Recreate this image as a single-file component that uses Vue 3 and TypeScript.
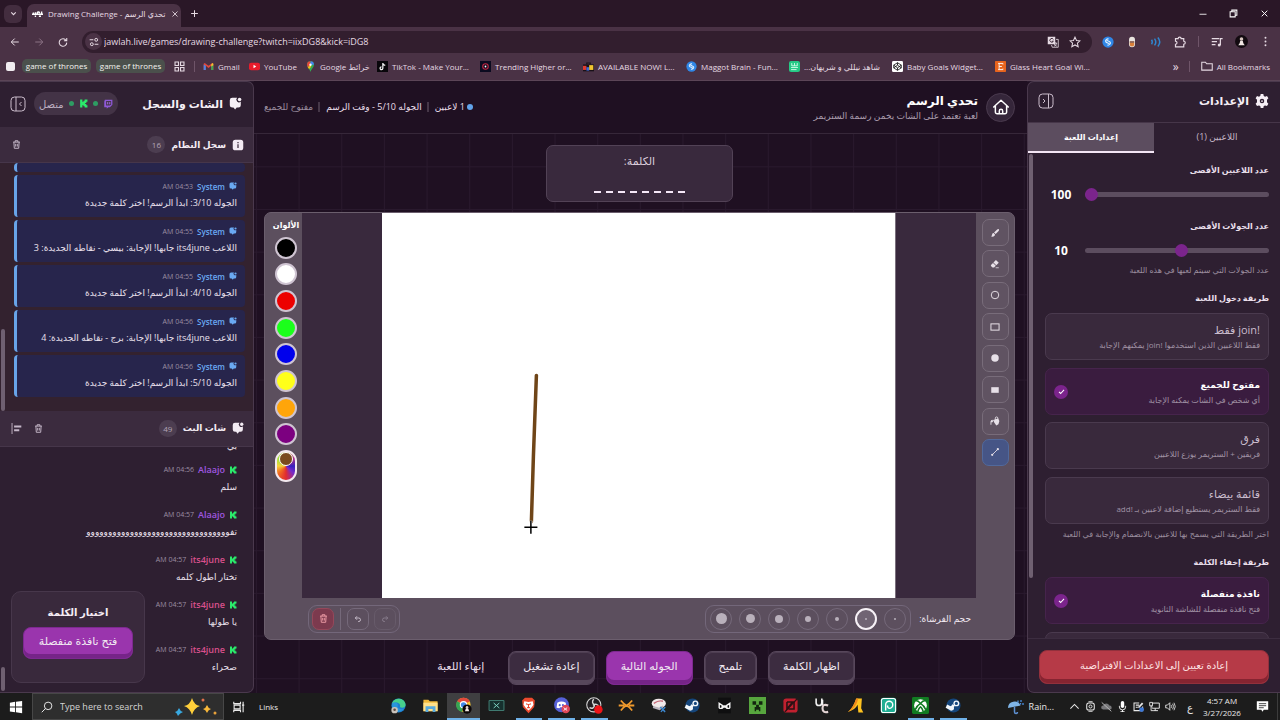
<script setup lang="ts">
import { ref } from 'vue'

interface Bookmark { label: string; icon: string; rtl?: boolean }
interface LogEntry { time: string; text: string }
interface ChatEntry { user: string; time: string; text: string; tone: string }
interface Choice { title: string; desc: string; value: string }

const glyphs: Record<string, string> = {
  trash: '<path d="M3 4.5h10M6 4.5V2.5h4v2M4.2 4.5l.6 9h6.4l.6-9M6.8 7v4M9.2 7v4" fill="none" stroke="currentColor" stroke-width="1.4"/>',
  chat: '<path d="M4 1h6a3 3 0 0 0 4.500 4.500V10a3 3 0 0 1-3 3h-2L7.500 15.500 5.500 13H4a3 3 0 0 1-3-3V4a3 3 0 0 1 3-3z" fill="currentColor"/><circle cx="13" cy="3" r="2.200" fill="currentColor"/>',
  info: '<rect x="1" y="1" width="14" height="14" rx="3.500" fill="currentColor"/><path d="M8 7v5M8 4v1.700" stroke="#4a3a4b" stroke-width="1.800"/>',
  kick: '<path d="M2 1h4v4h2V3h2V1h5v4h-2v2h-2v2h2v2h2v4h-5v-2H8v-2H6v4H2z" fill="#2bea6b"/>',
  twitch: '<path d="M3 1h12v8l-4 4H8.500L6 15.500V13H2V4z" fill="#8f58d8"/><path d="M5 3h8v5.500L11 10.500H5z" fill="#48344f"/><path d="M7.500 5v3.500M10.800 5v3.500" stroke="#a77ae8" stroke-width="1.500"/>',
  panelLeft: '<rect x="1" y="1" width="14" height="14" rx="3.500" fill="none" stroke="currentColor"/><path d="M6 1v14M11.500 6 9.500 8l2 2" fill="none" stroke="currentColor"/>',
  panelRight: '<rect x="1" y="1" width="14" height="14" rx="3.500" fill="none" stroke="currentColor"/><path d="M10.500 1v14M5 6l2 2-2 2" fill="none" stroke="currentColor"/>',
  gear: '<path d="M6.500 0h3l.5 2.200 1.500.8 2.200-.8 1.600 2.700L13.700 6.500v3l1.600 1.600-1.600 2.700-2.200-.8-1.500.8-.5 2.200h-3L6 13.800 4.500 13l-2.200.8L.7 11.100l1.600-1.600v-3L.7 4.900l1.600-2.700 2.200.8L6 2.200z" fill="currentColor"/><circle cx="8" cy="8" r="2.600" fill="#2e1f31"/><circle cx="8" cy="8" r="1" fill="currentColor"/>',
  home: '<path d="M1.500 8 8 2l6.500 6M3 7v5.500A1.500 1.500 0 0 0 4.500 14h7a1.500 1.500 0 0 0 1.500-1.500V7M6.500 14v-2.500a1.500 1.500 0 0 1 3 0V14" fill="none" stroke="currentColor" stroke-width="1.300" stroke-linejoin="round" stroke-linecap="round"/>',
  align: '<path d="M1.500 0v16" stroke="currentColor" stroke-width="1.300"/><path d="M4.500 5H15M4.500 10.500H12" stroke="currentColor" stroke-width="2.800"/>',
  brush: '<path d="M14 2c1 1 .3 2-.6 3L9 9.500 6.500 7.300 11.500 2.500c1-.9 1.700-1.300 2.500-.5zM5.700 8 8 10.300c.2 2.500-3 4.500-6.500 3 1.500-.6 1.500-1.800 2-3.300.3-1.300 1.200-1.900 2.200-2z" fill="currentColor"/>',
  eraser: '<path d="M9.500 1.500 14 6 10 10 5.500 5.500z" fill="currentColor"/><path d="M4.800 6.300 9.300 10.800 6.500 13.500H4L1.500 11V9.500z" fill="currentColor"/><path d="M9 14h5" stroke="currentColor" stroke-width="1.200"/>',
  circle: '<circle cx="8" cy="8" r="6" fill="none" stroke="currentColor" stroke-width="1.500"/>',
  rect: '<rect x="1.500" y="3" width="13" height="10" fill="none" stroke="currentColor" stroke-width="1.600"/>',
  disc: '<circle cx="8" cy="8" r="6" fill="currentColor"/>',
  block: '<rect x="2" y="3.500" width="12" height="9" fill="currentColor"/>',
  bucket: '<path d="M7 5.500 13 4l2 4-1.500 5-3.500 2-4-6z" fill="currentColor"/><path d="M8.500 6V3.500a2 2 0 0 1 4 0V6M1.500 14V9.500A2.500 2.500 0 0 1 4 7h3" fill="none" stroke="currentColor" stroke-width="1.400"/><circle cx="3" cy="8.500" r="1.800" fill="currentColor"/>',
  line: '<path d="M3.500 12.500 12.500 3.500" stroke="currentColor" stroke-width="1.400"/><circle cx="3.500" cy="12.500" r="1.800" fill="currentColor"/><circle cx="12.500" cy="3.500" r="1.800" fill="currentColor"/>',
  undo: '<path d="M6 2.500 2.500 6 6 9.500M3 6h6.500a3.500 3.500 0 0 1 0 7H8" fill="none" stroke="currentColor" stroke-width="1.700"/>',
  redo: '<path d="M10 2.500 13.500 6 10 9.500M13 6H6.500a3.500 3.500 0 0 0 0 7H8" fill="none" stroke="currentColor" stroke-width="1.700"/>',
  check: '<path d="M3.500 8.500 6.500 11.500 12.500 5" fill="none" stroke="currentColor" stroke-width="1.800"/>',
  back: '<path d="M14 8H2.500M7.500 2.500 2 8l5.500 5.500" fill="none" stroke="currentColor" stroke-width="1.600"/>',
  forward: '<path d="M2 8h11.500M8.500 2.500 14 8l-5.500 5.500" fill="none" stroke="currentColor" stroke-width="1.600"/>',
  reload: '<path d="M13 5.500A6 6 0 1 0 14 9M14 1.500V6H9.500" fill="none" stroke="currentColor" stroke-width="1.700"/>',
  tune: '<path d="M1 4.500h6M9 11.500h6" stroke="currentColor" stroke-width="1.700"/><circle cx="11.500" cy="4.500" r="2.300" fill="none" stroke="currentColor" stroke-width="1.600"/><circle cx="4.500" cy="11.500" r="2.300" fill="none" stroke="currentColor" stroke-width="1.600"/>',
  down: '<path d="M4 6l4 4 4-4" fill="none" stroke="currentColor" stroke-width="2"/>',
  up: '<path d="M2 11l6-6 6 6" fill="none" stroke="currentColor" stroke-width="1.500"/>',
  plus: '<path d="M8 2v12M2 8h12" stroke="currentColor" stroke-width="1.800"/>',
  close: '<path d="M3 3l10 10M13 3 3 13" stroke="currentColor" stroke-width="1.700"/>',
  min: '<path d="M1 8.500h14" stroke="currentColor" stroke-width="1.700"/>',
  max: '<path d="M2 5h9v9H2zM5 5V2h9v9h-3" fill="none" stroke="currentColor" stroke-width="1.800"/>',
  translate: '<rect x="1" y="1" width="10" height="10" fill="currentColor"/><path d="M8.500 4.500A2.500 2.500 0 1 0 8.500 7H6.500" fill="none" stroke="#321e2e" stroke-width="1.200"/><path d="M12 4.500h3v10.500H7L6 12M8.500 9.500h5M11 8.500v1M13 9.500c-.6 2-2 3.500-3.500 4M9.500 10.500c.6 1.500 2 2.500 3.500 3" fill="none" stroke="currentColor" stroke-width="1.100"/>',
  star: '<path d="M8 1.500l2 4.400 4.700.5-3.500 3.200 1 4.700L8 11.900l-4.200 2.400 1-4.700L1.300 6.400 6 5.900z" fill="none" stroke="currentColor" stroke-width="1.400"/>',
  puzzle: '<path d="M2 3.500h3.500a2 2 0 0 1 4 0H13V7a2 2 0 0 1 0 4v3.500H2V11a2 2 0 0 0 0-4z" fill="none" stroke="currentColor" stroke-width="1.600"/>',
  queue: '<path d="M1 3.500h10M1 7.500h7M1 11.500h5M12.500 12V3.500H15.500" fill="none" stroke="currentColor" stroke-width="1.600"/><circle cx="11" cy="12" r="2" fill="currentColor"/>',
  dots: '<circle cx="8" cy="2.500" r="1.400" fill="currentColor"/><circle cx="8" cy="8" r="1.400" fill="currentColor"/><circle cx="8" cy="13.500" r="1.400" fill="currentColor"/>',
  folder: '<path d="M1 3h5l1.500 2H15v8.500H1z" fill="none" stroke="currentColor" stroke-width="1.400"/>',
  apps: '<path d="M1.500 1.500h5v5h-5zM9.500 1.500h5v5h-5zM1.500 9.500h5v5h-5zM9.500 9.500h5v5h-5z" fill="none" stroke="currentColor" stroke-width="1.600"/>',
  shazam: '<circle cx="8" cy="8" r="7.500" fill="#2f86e6"/><path d="M8.800 4C6.500 3.500 4 5.500 5 7.500s4 1.500 4.500 3M7.200 12c2.300.5 4.800-1.500 3.800-3.500S7 7 6.500 5.500" fill="none" stroke="#dff0ff" stroke-width="1.500"/>',
  cup: '<rect x="4" y="1" width="8" height="14" rx="4" fill="#e9e4df"/><path d="M5 9h6v2a3 3 0 0 1-6 0z" fill="#d9803a"/><path d="M5 7h6v2H5z" fill="#7b4a38"/>',
  sound: '<path d="M2 5q2 3 0 6M6 3.500q3.500 4.500 0 9M10.500 2q5 6 0 12" fill="none" stroke="#2f86cf" stroke-width="2"/>',
  avatar: '<circle cx="8" cy="8" r="8" fill="#120a10"/><circle cx="8" cy="5" r="2.200" fill="#d8c6c0"/><path d="M6.500 7h3l.8 3 1.700 2.500H4L5.700 10z" fill="#efe6e2"/>',
  win: '<path d="M1 3 7 2v5.500H1zM8 1.900 15 1v6.500H8zM1 8.500h6V14l-6-1zM8 8.500h7V15l-7-.9z" fill="#fff"/>',
  search: '<circle cx="9.500" cy="6.500" r="5" fill="none" stroke="currentColor" stroke-width="1.300"/><path d="M6 10 1 15" stroke="currentColor" stroke-width="1.300"/>',
  taskview: '<path d="M1 1v2.500h9V1M1 15v-2.500h9V15M1.500 5.500h8v5h-8zM13.500 1v14M12 5.500h3" fill="none" stroke="currentColor" stroke-width="1.500"/>',
  camera: '<rect x="2.500" y="3" width="11" height="10" rx="3" fill="none" stroke="currentColor" stroke-width="1.500"/><circle cx="8" cy="8" r="2.200" fill="none" stroke="currentColor" stroke-width="1.400"/><path d="M5 1h6M5 15h6" stroke="currentColor" stroke-width="1.300"/>',
  cloudOff: '<path d="M3 12.500a3 3 0 0 1 .5-6 4.500 4.500 0 0 1 8.500 0 3 3 0 0 1 1 6z" fill="#77777a"/><path d="M1 2l14 13" stroke="#b9b9bb" stroke-width="1.400"/>',
  mic: '<rect x="5.500" y="0" width="5" height="10" rx="2.500" fill="#fff"/><path d="M3.500 7v1.500a4.500 4.500 0 0 0 9 0V7M8 13v3M5 15.500h6" fill="none" stroke="#fff" stroke-width="1.300"/>',
  edit: '<path d="M14 8v6H1.500V3H9M4 6h5M4 9h3" fill="none" stroke="currentColor" stroke-width="1.500"/><path d="M7 9l6-7 2 2-6 6z" fill="currentColor"/><circle cx="12.500" cy="12.500" r="3.500" fill="#3d78d6"/>',
  net: '<path d="M4 3h11v7.500H4zM9 10.500v3.500M6 14h7" fill="none" stroke="currentColor" stroke-width="1.400"/><path d="M1 2h4v5H1zM3 7v7h3" fill="#1c1c1c" stroke="currentColor" stroke-width="1.300"/>',
  volume: '<path d="M1 6h2.500L7 2.500v11L3.500 10H1z" fill="none" stroke="currentColor" stroke-width="1.300"/><path d="M9 6q1.500 2 0 4M11 4q3 4 0 8M13 2.500q4 5.500 0 11" fill="none" stroke="currentColor" stroke-width="1.200"/>',
  note: '<path d="M1 1.500h14v10.500H9.500L8 14.500 6.500 12H1z" fill="#fff"/><path d="M3.500 4.500h9M3.500 7h9M3.500 9.500h6" stroke="#1c1c1c"/>',
  rain: '<path d="M0 9a6.500 6.500 0 0 1 12.500-2.500z" fill="#7fb4e6"/><path d="M6.500 8v5a1.500 1.500 0 0 0 3 0" fill="none" stroke="#5d8fd0" stroke-width="1.500"/><path d="M10 1.500v2M13 1v2M15 4v2M12.500 4v1.500" stroke="#4a90e2" stroke-width="1.300"/>',
  gmail: '<path d="M1 4v9h3V7l4 3 4-3v6h3V4l-1.500-1L8 7 2.500 3z" fill="#e0483c"/><path d="M1 5v8h3V7z" fill="#4a86e8"/><path d="M15 5v8h-3V7z" fill="#3aa757"/><path d="M15 4v2l-3 2V5l1.500-2z" fill="#f4c030"/>',
  youtube: '<rect x="0" y="2.500" width="16" height="11" rx="3" fill="#e81c2c"/><path d="M6.500 5.500v5L10.500 8z" fill="#fff"/>',
  maps: '<path d="M8 16C7 11.500 3 10 3 5.500a5 5 0 0 1 10 0C13 10 9 11.500 8 16z" fill="#35a853"/><path d="M3 5.500A5 5 0 0 1 8 .5v5L4 9C3.400 8 3 7 3 5.500z" fill="#e6453a"/><path d="M8 .5a5 5 0 0 1 5 5L8 5.500z" fill="#4285f4"/><path d="M4 9l4-3.500 1 3-3 3z" fill="#f8bb15"/><circle cx="8" cy="5.500" r="1.700" fill="#fff"/>',
  tiktok: '<rect width="16" height="16" fill="#08060a"/><path d="M8.500 3v7.500a2 2 0 1 1-2-2M8.500 3.500c.4 2 1.700 2.700 3.500 3" fill="none" stroke="#f4f4f4" stroke-width="1.800"/>',
  trending: '<rect width="16" height="16" fill="#0b0b20"/><circle cx="8" cy="8" r="4" fill="none" stroke="#c22743" stroke-width="1.600"/><circle cx="8" cy="8" r="1.300" fill="#fff"/>',
  bag: '<path d="M5.500 5V3h5v2" fill="none" stroke="#171118" stroke-width="1.600"/><rect x="0" y="5" width="16" height="10" fill="#181018"/><path d="M0 7h5v6H0z" fill="#e03a2e"/><path d="M5 9h4v5H5z" fill="#3d6bd8"/><path d="M9 6h6v7H9z" fill="#f0c530"/>',
  green: '<rect width="16" height="16" rx="3" fill="#25c985"/><path d="M4 3v4h8V3M8 3v4M3 9.500h10M3 12.500h8" fill="none" stroke="#d7ffec" stroke-width="1.300"/>',
  pen: '<rect width="16" height="16" rx="2" fill="#fff"/><path d="M8 2.500l5.500 3.500v4L8 13.500 2.500 10V6zM8 2.500V6M8 10v3.500M2.500 6 8 10l5.500-4M2.500 10 8 6l5.500 4" fill="none" stroke="#111" stroke-width="1.200"/>',
  etsy: '<rect width="16" height="16" rx="1" fill="#e8641d"/><path d="M11.500 5V3.500h-7M6 3.500v9M4.500 12.500h7V11M6 8h4" fill="none" stroke="#fff" stroke-width="1.300"/>',
  jawlah: '<path d="M0 9h16M2 9V6.500M5 9V6M8.500 9a1.700 1.700 0 1 1 2.500-1.500M14 9V5M4 12h2M10 12h3" fill="none" stroke="#fff" stroke-width="2"/>',
}

const bookmarks: Bookmark[] = [
  { label: 'TikTok - Make Your...', icon: 'tiktok' },
  { label: 'Trending Higher or...', icon: 'trending' },
  { label: 'AVAILABLE NOW! L...', icon: 'bag' },
  { label: 'Maggot Brain - Fun...', icon: 'shazam' },
  { label: 'شاهد نيللي و شريهان...', icon: 'green', rtl: true },
  { label: 'Baby Goals Widget...', icon: 'pen' },
  { label: 'Glass Heart Goal Wi...', icon: 'etsy' },
]

const log: LogEntry[] = [
  { time: '04:53 AM', text: 'الجوله 3/10: ابدأ الرسم! اختر كلمة جديدة' },
  { time: '04:55 AM', text: 'اللاعب its4june جابها! الإجابة: بيسي - نقاطه الجديدة: 3' },
  { time: '04:55 AM', text: 'الجوله 4/10: ابدأ الرسم! اختر كلمة جديدة' },
  { time: '04:56 AM', text: 'اللاعب its4june جابها! الإجابة: برج - نقاطه الجديدة: 4' },
  { time: '04:56 AM', text: 'الجوله 5/10: ابدأ الرسم! اختر كلمة جديدة' },
]

const chat: ChatEntry[] = [
  { user: 'Alaajo', time: '04:56 AM', text: 'سلم', tone: 'violet' },
  { user: 'Alaajo', time: '04:57 AM', text: 'تفووووووووووووووووووووووووووووووووو', tone: 'violet' },
  { user: 'its4june', time: '04:57 AM', text: 'تختار اطول كلمه', tone: 'pink' },
  { user: 'its4june', time: '04:57 AM', text: 'يا طولها', tone: 'pink' },
  { user: 'its4june', time: '04:57 AM', text: 'صحراء', tone: 'pink' },
]

const joinModes: Choice[] = [
  { value: 'join', title: '!join فقط', desc: 'فقط اللاعبين الذين استخدموا !join يمكنهم الإجابة' },
  { value: 'open', title: 'مفتوح للجميع', desc: 'أي شخص في الشات يمكنه الإجابة' },
  { value: 'teams', title: 'فرق', desc: 'فريقين + الستريمر يوزع اللاعبين' },
  { value: 'white', title: 'قائمة بيضاء', desc: 'فقط الستريمر يستطيع إضافة لاعبين بـ !add' },
]

const joinMode = ref('open')
const hideMode = ref('popup')
const maxPlayers = ref(100)
const maxRounds = ref(10)

const swatches = ['black', 'white', 'red', 'lime', 'blue', 'yellow', 'orange', 'purple']
const tools = ['brush', 'eraser', 'circle', 'rect', 'disc', 'block', 'bucket', 'line']
const activeTool = ref('line')
const brushSizes = [2, 2, 4, 6, 8, 9, 11]
const activeBrush = ref(1)

const steam = '<circle cx="12" cy="12" r="10" fill="#15467c"/><path d="M2 13l8 4" stroke="#f2f6fa" stroke-width="5"/><circle cx="9.500" cy="16" r="3.200" fill="#f2f6fa"/><circle cx="16" cy="9" r="4.200" fill="#f2f6fa"/><circle cx="16" cy="9" r="2.200" fill="#15467c"/><path d="M12 11l-2 4" stroke="#f2f6fa" stroke-width="4"/>'
const dock: { name: string; art: string; open?: boolean; active?: boolean }[] = [
  { name: 'Edge', art: '<circle cx="12" cy="12" r="10" fill="#1d7fd0"/><path d="M3 9C5 0 21 0 22 11c0 4-5 5-8 3 2-5-5-8-11-5z" fill="#47d08c"/><path d="M3 9c5-3 9 0 8 3s2 6 8 5c-5 6-14 5-16-2z" fill="#2a95dc"/><rect x="2" y="14" width="9" height="9" rx="4" fill="#c9c2ba"/><circle cx="6.500" cy="18" r="1.800" fill="#5c4a42"/>' },
  { name: 'Explorer', art: '<path d="M2 4h7l2 2h11v14H2z" fill="#f0b83a"/><path d="M2 8h20v12H2z" fill="#ffe08a"/><path d="M5 13h14v8h-4v-4H9v4H5z" fill="#58a9dc"/>' },
  { name: 'Chrome', art: '<circle cx="12" cy="11" r="10" fill="#f6c62f"/><path d="M12 11 3 6a10.500 10.500 0 0 1 18 0z" fill="#e2493c"/><path d="M12 11 3 6a10 10 0 0 0 7 15z" fill="#35a454"/><circle cx="12" cy="11" r="4.500" fill="#4289e8" stroke="#fff" stroke-width="1.500"/><circle cx="17" cy="17" r="6.500" fill="#0c0709"/><circle cx="17" cy="14.500" r="1.800" fill="#e0cfc9"/><path d="M15.500 16h3l1.500 4h-6z" fill="#f3eae7"/>', open: true, active: true },
  { name: 'Capture', art: '<rect x="1.500" y="5" width="21" height="14" rx="1" fill="#16302e" stroke="#3f7a70" stroke-width="1.500"/><path d="M8 8.500l8 7M16 8.500l-8 7" stroke="#7fd5c4" stroke-width="1.400"/>' },
  { name: 'Brave', art: '<path d="M7 1h10l4 4-1 9-8 9-8-9-1-9z" fill="#ec4a2e"/><path d="M6 6l6 1 6-1 1 5-3 4-4 4-4-4-3-4z" fill="#fff"/><path d="M8.500 9.500l2.500 1M15.500 9.500l-2.500 1M12 10v4M10 15h4" stroke="#ec4a2e" stroke-width="1.500"/>', open: true },
  { name: 'Discord', art: '<circle cx="12" cy="11" r="10.500" fill="#5661d8"/><path d="M6 8q6-3 12 0l1 7-4 1-1-1.500h-4L9 16l-4-1z" fill="#fff"/><circle cx="9.500" cy="11.500" r="1.500" fill="#5661d8"/><circle cx="14" cy="11.500" r="1.500" fill="#5661d8"/><circle cx="18" cy="17" r="6" fill="#df4658"/><path d="M15 15l5 4M20 15l-5 4" stroke="#fff" stroke-width="1.300"/>', open: true },
  { name: 'OBS', art: '<circle cx="11" cy="11" r="10" fill="#211f22" stroke="#d5d5d5" stroke-width="1.500"/><path d="M11 3c-3 3-2 7 1 8M18 14c-1-4-5-5-8-2M5 15c4 2 7 0 7-4" fill="none" stroke="#d5d5d5" stroke-width="2"/><circle cx="17.500" cy="17.500" r="6" fill="#ee1418"/>', open: true },
  { name: 'Spark', art: '<path d="M1 12h8M23 12h-8M4 5q4 5 8 7 4-2 8-7M4 19q4-5 8-7 4 2 8 7" fill="none" stroke="#f09a2d" stroke-width="2.500"/>' },
  { name: 'Snip', art: '<ellipse cx="11" cy="9" rx="10" ry="6.500" fill="#f1e9ea"/><path d="M4 9q7-5 13-3" stroke="#c76b7b" stroke-width="2" fill="none"/><path d="M3 14l9 3 5-4" stroke="#b9b3bd" stroke-width="3" fill="none"/><path d="M13 14l7 7M20 14l-6 7" stroke="#3d87cf" stroke-width="2"/>' },
  { name: 'Steam', art: steam },
  { name: 'Mask', art: '<rect x="3" y="1" width="18" height="22" fill="#0f0f10"/><path d="M4.500 16V9L12 14l7.500-5v7M8.500 16v-3M15.500 16v-3M4.500 16h4l3.500-3 3.500 3h4" fill="none" stroke="#f4f4f4" stroke-width="2"/>' },
  { name: 'Craft', art: '<rect x="0" y="0" width="24" height="24" fill="#57a63e"/><path d="M5 6h5v5H5zM14 6h5v5h-5zM10 11h4v3h2v6h-2v-2h-4v2H8v-6h2z" fill="#12240f"/>' },
  { name: 'Zed', art: '<rect x="2" y="2" width="20" height="20" rx="4" fill="#c0202f"/><path d="M7 7h8L7 17V7M17 7v10H9" fill="none" stroke="#2a1114" stroke-width="2.200"/><path d="M4 21 21 3" stroke="#2a1114" stroke-width="2"/>' },
  { name: 'UC', art: '<path d="M3 2v6q0 4 4 4t4-4V2M12 4v8" fill="none" stroke="#f0f0f0" stroke-width="2.300"/><path d="M20 12q-8-3-8 4t8 5" fill="none" stroke="#e3d4d4" stroke-width="3"/>' },
  { name: 'Arrow', art: '<path d="M1 21Q8 17 13 2h8l-1 14 3 6h-7l-1-11q-4 8-14 10z" fill="#ffc31f"/><path d="M13 2h3q-3 14-15 19 8-6 12-19z" fill="#f08a1c"/>' },
  { name: 'Teal', art: '<rect x="1" y="1" width="22" height="22" rx="4" fill="#1fae93"/><rect x="2" y="2" width="20" height="20" rx="3" fill="none" stroke="#fff" stroke-width="1.500"/><path d="M8 19v-8a5 5 0 1 1 5 5q-3-1-2-4" fill="none" stroke="#fff" stroke-width="2"/>' },
  { name: 'Xbox', art: '<rect x="0" y="0" width="24" height="24" rx="2" fill="#117c22"/><circle cx="12" cy="12" r="9" fill="#fff"/><path d="M5 5q4 0 7 4 3-4 7-4M4.500 18Q7 12 12 9q5 3 7.500 9M8 21q2-6 4-7 2 1 4 7" fill="none" stroke="#117c22" stroke-width="2.200"/>', open: true },
  { name: 'Steam chat', art: steam, open: true },
]
const tray = ['up', 'camera', 'cloudOff', 'mic', 'edit', 'net', 'volume']
</script>

<template>
  <div class="desktop">
    <header class="browser">
      <div class="tabstrip">
        <button class="tab-search" aria-label="Search tabs"><svg class="i9" viewBox="0 0 16 16" v-html="glyphs.down" /></button>
        <div class="tab">
          <svg class="i11" viewBox="0 0 16 16" v-html="glyphs.jawlah" />
          <span class="tab-title">Drawing Challenge - تحدي الرسم</span>
          <button aria-label="Close tab"><svg class="i8" viewBox="0 0 16 16" v-html="glyphs.close" /></button>
        </div>
        <button class="new-tab" aria-label="New tab"><svg class="i9" viewBox="0 0 16 16" v-html="glyphs.plus" /></button>
        <div class="window-buttons">
          <button aria-label="Minimize"><svg class="i8" viewBox="0 0 16 16" v-html="glyphs.min" /></button>
          <button aria-label="Restore"><svg class="i9" viewBox="0 0 16 16" v-html="glyphs.max" /></button>
          <button aria-label="Close"><svg class="i9" viewBox="0 0 16 16" v-html="glyphs.close" /></button>
        </div>
      </div>
      <div class="toolbar">
        <button aria-label="Back"><svg class="i10" viewBox="0 0 16 16" v-html="glyphs.back" /></button>
        <button aria-label="Forward" class="dim"><svg class="i10" viewBox="0 0 16 16" v-html="glyphs.forward" /></button>
        <button aria-label="Reload"><svg class="i10" viewBox="0 0 16 16" v-html="glyphs.reload" /></button>
        <div class="address">
          <span class="site-chip"><svg class="i10" viewBox="0 0 16 16" v-html="glyphs.tune" /></span>
          <input aria-label="Address" value="jawlah.live/games/drawing-challenge?twitch=iixDG8&kick=iDG8">
          <svg class="i12" viewBox="0 0 16 16" v-html="glyphs.translate" />
          <svg class="i12" viewBox="0 0 16 16" v-html="glyphs.star" />
        </div>
        <div class="extensions">
          <svg class="i12" viewBox="0 0 16 16" v-html="glyphs.shazam" />
          <svg class="i12" viewBox="0 0 16 16" v-html="glyphs.cup" />
          <svg class="i12" viewBox="0 0 16 16" v-html="glyphs.sound" />
          <svg class="i12" viewBox="0 0 16 16" v-html="glyphs.puzzle" />
          <span class="bar" />
          <svg class="i12" viewBox="0 0 16 16" v-html="glyphs.queue" />
          <svg class="i13" viewBox="0 0 16 16" v-html="glyphs.avatar" />
          <svg class="i11" viewBox="0 0 16 16" v-html="glyphs.dots" />
        </div>
      </div>
      <nav class="bookmarks">
        <span class="blank-mark" />
        <a href="#" class="chip">game of thrones</a>
        <a href="#" class="chip">game of thrones</a>
        <svg class="i11 apps" viewBox="0 0 16 16" v-html="glyphs.apps" />
        <span class="bar" />
        <a href="#" class="mark gmail"><svg class="i11" viewBox="0 0 16 16" v-html="glyphs.gmail" />Gmail</a>
        <a href="#" class="mark youtube"><svg class="i11" viewBox="0 0 16 16" v-html="glyphs.youtube" />YouTube</a>
        <a href="#" class="mark maps"><svg class="i11" viewBox="0 0 16 16" v-html="glyphs.maps" /><span>Google خرائط</span></a>
        <a v-for="b in bookmarks" :key="b.label" href="#" class="mark wide"><svg class="i11" viewBox="0 0 16 16" v-html="glyphs[b.icon]" /><span :dir="b.rtl ? 'rtl' : 'ltr'">{{ b.label }}</span></a>
        <button class="more" aria-label="More bookmarks">»</button>
        <span class="bar" />
        <a href="#" class="mark all"><svg class="i12" viewBox="0 0 16 16" v-html="glyphs.folder" />All Bookmarks</a>
      </nav>
    </header>

    <main class="app">
      <aside class="side chat-side" dir="rtl">
        <header class="side-head">
          <svg class="i13" viewBox="0 0 16 16" v-html="glyphs.chat" />
          <h2>الشات والسجل</h2>
          <div class="status-pill">
            <svg class="i10" viewBox="0 0 16 16" v-html="glyphs.twitch" /><i />
            <svg class="i9" viewBox="0 0 16 16" v-html="glyphs.kick" /><i />
            <span>متصل</span>
          </div>
          <button class="toggle" aria-label="إخفاء الشات"><svg class="i16" viewBox="0 0 16 16" v-html="glyphs.panelLeft" /></button>
        </header>
        <div class="section-head">
          <svg class="i12" viewBox="0 0 16 16" v-html="glyphs.info" />
          <h3>سجل النظام</h3><b class="count">16</b>
          <button class="push" aria-label="مسح السجل"><svg class="i11" viewBox="0 0 16 16" v-html="glyphs.trash" /></button>
        </div>
        <div class="feed log">
          <article class="msg sys earlier" />
          <article v-for="(m, i) in log" :key="i" class="msg sys">
            <p class="meta"><svg class="i8" viewBox="0 0 16 16" v-html="glyphs.chat" /><b>System</b><time>{{ m.time }}</time></p>
            <p class="body">{{ m.text }}</p>
          </article>
          <span class="thumb log-thumb" />
        </div>
        <div class="section-head">
          <svg class="i12" viewBox="0 0 16 16" v-html="glyphs.chat" />
          <h3>شات البث</h3><b class="count">49</b>
          <button class="push" aria-label="مسح الشات"><svg class="i11" viewBox="0 0 16 16" v-html="glyphs.trash" /></button>
          <button aria-label="محاذاة"><svg class="i11" viewBox="0 0 16 16" v-html="glyphs.align" /></button>
        </div>
        <div class="feed">
          <article class="msg earlier"><p class="body">بي</p></article>
          <article v-for="(m, i) in chat" :key="i" class="msg">
            <p class="meta"><svg class="i8" viewBox="0 0 16 16" v-html="glyphs.kick" /><b :class="m.tone">{{ m.user }}</b><time>{{ m.time }}</time></p>
            <p class="body">{{ m.text }}</p>
          </article>
          <span class="thumb chat-thumb" />
          <section class="word-picker">
            <h3>اختيار الكلمة</h3>
            <button class="btn primary">فتح نافذة منفصلة</button>
          </section>
        </div>
      </aside>

      <section class="stage" dir="rtl">
        <header class="stage-head">
          <button class="home" aria-label="الرئيسية"><svg class="i18" viewBox="0 0 16 16" v-html="glyphs.home" /></button>
          <div class="titles">
            <h1>تحدي الرسم</h1>
            <p>لعبة تعتمد على الشات يخمن رسمة الستريمر</p>
          </div>
          <div class="facts">
            <span class="players"><i />1 لاعبين</span>
            <span>الجوله 5/10 - وقت الرسم</span>
            <span class="muted">مفتوح للجميع</span>
          </div>
        </header>
        <div class="word-card">
          <p>الكلمة:</p>
          <div class="dashes"><i v-for="n in 8" :key="n" /></div>
        </div>
        <div class="easel">
          <div class="tools">
            <button v-for="t in tools" :key="t" :class="{ on: t === activeTool }" :aria-label="t" @click="activeTool = t"><svg class="i10" viewBox="0 0 16 16" v-html="glyphs[t]" /></button>
          </div>
          <div class="canvas-area">
            <svg class="canvas" viewBox="0 0 512 384">
              <rect width="512" height="384" fill="#fff" />
              <path d="M154 162 151 243 149 308" fill="none" stroke="#6f4518" stroke-width="3.500" stroke-linecap="round" />
              <path d="M148.500 307v13M142 313.500h13" stroke="#fff" stroke-width="3" />
              <path d="M148.500 307v13M142 313.500h13" stroke="#000" stroke-width="1.500" />
            </svg>
          </div>
          <div class="palette">
            <h4>الألوان</h4>
            <button v-for="c in swatches" :key="c" class="swatch" :class="c" :aria-label="c" />
            <button class="swatch custom" aria-label="لون مخصص"><i /></button>
          </div>
          <div class="easel-foot">
            <span class="brush-label">حجم الفرشاة:</span>
            <div class="group sizes">
              <button v-for="(s, i) in brushSizes" :key="i" :class="{ on: i === activeBrush }" :aria-label="'حجم ' + (i + 1)" @click="activeBrush = i"><i :style="{ width: s + 'px', height: s + 'px' }" /></button>
            </div>
            <div class="group history">
              <button class="faint" aria-label="إعادة"><svg class="i8" viewBox="0 0 16 16" v-html="glyphs.redo" /></button>
              <button aria-label="تراجع"><svg class="i8" viewBox="0 0 16 16" v-html="glyphs.undo" /></button>
              <span class="bar" />
              <button class="danger" aria-label="مسح"><svg class="i11" viewBox="0 0 16 16" v-html="glyphs.trash" /></button>
            </div>
          </div>
        </div>
        <div class="actions">
          <button class="btn">اظهار الكلمة</button>
          <button class="btn">تلميح</button>
          <button class="btn primary">الجوله التالية</button>
          <button class="btn">إعادة تشغيل</button>
          <button class="plain">إنهاء اللعبة</button>
        </div>
      </section>

      <aside class="side settings" dir="rtl">
        <header class="side-head short">
          <svg class="i14" viewBox="0 0 16 16" v-html="glyphs.gear" />
          <h2>الإعدادات</h2>
          <button class="toggle push" aria-label="إخفاء الإعدادات"><svg class="i16" viewBox="0 0 16 16" v-html="glyphs.panelRight" /></button>
        </header>
        <div class="tabs">
          <button>اللاعبين (1)</button>
          <button class="on">إعدادات اللعبة</button>
        </div>
        <div class="form">
          <label class="field" for="players">عدد اللاعبين الأقصى</label>
          <div class="slider"><input id="players" v-model.number="maxPlayers" type="range" min="2" max="100"><output>{{ maxPlayers }}</output></div>
          <label class="field" for="rounds">عدد الجولات الأقصى</label>
          <div class="slider"><input id="rounds" v-model.number="maxRounds" type="range" min="1" max="20"><output>{{ maxRounds }}</output></div>
          <p class="hint">عدد الجولات التي سيتم لعبها في هذه اللعبة</p>
          <h4 class="field">طريقة دخول اللعبة</h4>
          <div class="choices">
            <label v-for="c in joinModes" :key="c.value" class="choice" :class="{ on: joinMode === c.value }">
              <input v-model="joinMode" type="radio" name="join" :value="c.value">
              <span class="choice-text"><b>{{ c.title }}</b><small>{{ c.desc }}</small></span>
              <span v-if="joinMode === c.value" class="tick"><svg class="i9" viewBox="0 0 16 16" v-html="glyphs.check" /></span>
            </label>
          </div>
          <p class="hint">اختر الطريقة التي يسمح بها للاعبين بالانضمام والإجابة في اللعبة</p>
          <h4 class="field">طريقة إخفاء الكلمة</h4>
          <div class="choices">
            <label class="choice" :class="{ on: hideMode === 'popup' }">
              <input v-model="hideMode" type="radio" name="hide" value="popup">
              <span class="choice-text"><b>نافذة منفصلة</b><small>فتح نافذة منفصلة للشاشة الثانوية</small></span>
              <span v-if="hideMode === 'popup'" class="tick"><svg class="i9" viewBox="0 0 16 16" v-html="glyphs.check" /></span>
            </label>
            <div class="choice" />
          </div>
          <span class="thumb form-thumb" />
        </div>
        <footer class="side-foot"><button class="btn reset">إعادة تعيين إلى الاعدادات الافتراضية</button></footer>
      </aside>
    </main>

    <footer class="taskbar">
      <button class="start" aria-label="Start"><svg class="i14" viewBox="0 0 16 16" v-html="glyphs.win" /></button>
      <div class="search">
        <svg class="i12" viewBox="0 0 16 16" v-html="glyphs.search" />
        <input type="text" aria-label="Search" placeholder="Type here to search">
        <svg class="sparkles" viewBox="0 0 42 20">
          <path d="M17 1q2 7 8 8-6 2-8 9-2-7-8-9 6-1 8-8z" fill="#ffcf3a" />
          <path d="M32 8q1 3 4 4-3 1-4 4-1-3-4-4 3-1 4-4z" fill="#f9b83a" />
          <path d="M4 11q1 3 4 4-3 1-5 4-1-3-3-4 3-1 4-4z" fill="#39a9e0" />
          <circle cx="28" cy="3" r="1.500" fill="#e0704a" /><circle cx="40" cy="16" r="1.500" fill="#e7a13a" />
        </svg>
      </div>
      <button class="view" aria-label="Task view"><svg class="i12" viewBox="0 0 16 16" v-html="glyphs.taskview" /></button>
      <span class="links">Links</span>
      <div class="dock">
        <button v-for="d in dock" :key="d.name" :class="{ open: d.open, active: d.active }" :aria-label="d.name"><svg class="i17" viewBox="0 0 24 24" v-html="d.art" /></button>
      </div>
      <div class="weather"><svg class="i16" viewBox="0 0 16 16" v-html="glyphs.rain" />Rain...</div>
      <div class="tray">
        <svg v-for="t in tray" :key="t" class="i11" viewBox="0 0 16 16" v-html="glyphs[t]" />
      </div>
      <span class="lang">ع</span>
      <time class="clock">4:57 AM<br>3/27/2026</time>
      <button class="notes" aria-label="Notifications"><svg class="i13" viewBox="0 0 16 16" v-html="glyphs.note" /></button>
    </footer>
  </div>
</template>

<style>
body { margin: 0; background: #1f1022; }
</style>

<style scoped>
* { box-sizing: border-box; }
.desktop {
  display: flex; flex-direction: column; height: 100vh; overflow: hidden;
  font-family: "Open Sans", "Noto Sans", "DejaVu Sans", sans-serif; font-size: 9px; color: #eadfea;
}
button { font: inherit; color: inherit; background: none; border: 0; padding: 0; display: flex; align-items: center; justify-content: center; flex: none; }
input { font: inherit; color: inherit; }
a { color: inherit; text-decoration: none; }
h1, h2, h3, h4, p { margin: 0; }
svg { flex: none; display: block; }
.i8 { width: 8px; height: 8px; } .i9 { width: 9px; height: 9px; } .i10 { width: 10px; height: 10px; }
.i11 { width: 11px; height: 11px; } .i12 { width: 12px; height: 12px; } .i13 { width: 13px; height: 13px; }
.i14 { width: 14px; height: 14px; } .i16 { width: 16px; height: 16px; } .i17 { width: 17px; height: 17px; } .i18 { width: 18px; height: 18px; }
.bar { width: 1px; height: 11px; background: #6f5569; flex: none; }
.push { margin-inline-start: auto; }

/* browser frame */
.browser { flex: none; font-size: 8px; background: #4a3245; color: #e6dae3; }
.tabstrip { height: 27px; background: #2a1727; display: flex; align-items: center; }
.tab-search { width: 18px; height: 18px; margin-left: 4px; border-radius: 6px; background: #432d3f; }
.tab { display: flex; align-items: center; gap: 5px; align-self: flex-end; height: 23px; width: 154px; margin-left: 5px; padding: 0 7px 4px 5px; background: #4a3245; border-radius: 7px 7px 0 0; }
.tab-title { flex: 1; white-space: nowrap; text-align: right; }
.new-tab { margin-left: 9px; }
.window-buttons { margin-left: auto; display: flex; gap: 22px; padding-right: 11px; color: #fff; }
.toolbar { height: 29px; display: flex; align-items: center; padding: 0 9px 0 10px; gap: 14px; }
.toolbar .dim { color: #8b7285; }
.address { flex: 1; height: 22px; border-radius: 11px; background: #321e2e; display: flex; align-items: center; gap: 10px; padding: 0 11px 0 3px; margin-right: -4px; }
.site-chip { width: 17px; height: 17px; border-radius: 9px; background: #4a3245; display: grid; place-items: center; }
.address input { flex: 1; min-width: 0; background: none; border: 0; padding: 0; font-size: 9px; margin-left: -8px; outline: 0; }
.extensions { display: flex; align-items: center; gap: 12px; }
.bookmarks { height: 25px; padding: 0 10px 4px 6px; display: flex; align-items: center; border-bottom: 1px solid #5b4557; }
.blank-mark { width: 9px; height: 9px; border-radius: 2px; background: #f1ecf0; margin-right: 7px; }
.chip { height: 14px; line-height: 14px; width: 69px; text-align: center; border-radius: 5px; background: #4b504c; color: #f3f3ee; margin-right: 5px; }
.apps { margin: 0 9px 0 4px; }
.mark { display: flex; align-items: center; gap: 4px; white-space: nowrap; flex: none; }
.gmail { width: 37px; margin: 0 9px 0 8px; }
.youtube { width: 47px; margin-right: 9px; }
.maps { width: 63px; margin-right: 9px; }
.wide { width: 92px; margin-right: 11px; }
.more { margin: 0 10px 0 auto; font-size: 12px; }
.all { margin-left: 11px; }

/* game shell */
.app {
  flex: 1; min-height: 0; display: grid; grid-template-columns: 254px minmax(0, 1fr) 253px; grid-template-rows: minmax(0, 1fr);
  background-color: #1f1022;
  background-image: linear-gradient(#29192d 1px, transparent 1px), linear-gradient(90deg, #29192d 1px, transparent 1px);
  background-size: calc(100vw / 30) calc(100vw / 30);
}
.side { display: flex; flex-direction: column; min-height: 0; background: #2e1f31; border: 1px solid #4a394d; }
.chat-side { border-left: 0; border-radius: 0 7px 7px 0; overflow: hidden; }
.settings { border-right: 0; border-radius: 7px 0 0 7px; overflow: hidden; }
.side-head { flex: none; height: 45px; display: flex; align-items: center; padding: 0 11px 2px 10px; color: #f6eff6; }
.side-head.short { height: 40px; }
.side-head h2 { font-size: 11px; line-height: 20px; margin-inline-start: 6px; }
.toggle { color: #cbbdcc; }
.status-pill { margin-inline-start: auto; margin-inline-end: 8px; height: 23px; padding: 0 5px; border-radius: 12px; background: #433346; display: flex; align-items: center; gap: 5px; font-size: 10px; color: #bcaec0; }
.status-pill i { width: 5px; height: 5px; border-radius: 3px; background: #2e9c63; }
.section-head { flex: none; height: 36px; display: flex; align-items: center; gap: 6px; padding: 0 9px 0 8px; background: #3b2b3e; border-bottom: 1px solid #46364a; color: #f3ebf3; }
.section-head h3 { font-size: 9px; line-height: 18px; }
.section-head button { color: #c6b8c9; width: 16px; height: 18px; }
.count { min-width: 18px; height: 17px; line-height: 17px; padding: 0 4px; border-radius: 9px; background: #4c3d50; color: #b3a4b6; font-size: 8px; font-weight: 400; text-align: center; }
.feed { position: relative; flex: 1; min-height: 0; overflow: hidden; display: flex; flex-direction: column; justify-content: flex-end; gap: 3px; padding: 0 8px 12px 14px; }
.feed.log { background: #33222f; padding-bottom: 14px; }
.msg { flex: none; height: 42px; padding: 4px 8px 0; line-height: 15px; display: flex; flex-direction: column; gap: 2px; }
.msg.earlier { flex: 1; height: auto; min-height: 0; padding-top: 0; justify-content: flex-end; }
.msg.earlier .body { line-height: 18px; }
.sys { background: #27254c; border-left: 3px solid #68a4e8; border-radius: 4px; gap: 1px; }
.sys .meta b, .sys .meta svg { color: #6aa9f2; }
.meta { display: flex; align-items: center; gap: 4px; white-space: nowrap; font-size: 8px; }
.meta b { font-weight: 600; }
.meta time { font-size: 7px; color: #9a8da1; }
.meta .violet, .meta .pink { font-size: 9px; }
.violet { color: #a057e0; } .pink { color: #d9508c; }
.body { font-size: 9px; white-space: nowrap; color: #e9e0ec; }
.thumb { position: absolute; width: 4px; border-radius: 2px; background: #6f6071; }
.log-thumb { left: 1px; top: 67%; bottom: 0; }
.chat-thumb { left: 1px; top: 90%; bottom: 1px; }
.form-thumb { left: 1px; top: 1px; height: 424px; }
.word-picker { position: absolute; left: 11px; bottom: 9px; width: 134px; height: 92px; padding: 9px 11px; border-radius: 10px; background: #39293c; border: 1px solid #47374b; text-align: center; }
.word-picker h3 { font-size: 10px; line-height: 22px; margin-bottom: 4px; color: #f5edf5; }
.word-picker .btn { width: 100%; height: 32px; }

.btn { height: 34px; padding: 0 14px 4px; border-radius: 8px; border: 1px solid #57475b; background: #3c2c40; box-shadow: inset 0 -4px 0 #57475b, inset 0 0 0 1px #4e3e52; font-size: 11px; line-height: 16px; white-space: nowrap; color: #f1e9f2; }
.btn.primary { background: #9a35ad; border-color: #7d2990; box-shadow: inset 0 -4px 0 #762488; }
.btn.reset { width: 100%; background: #b63a47; border-color: #92303c; box-shadow: inset 0 -4px 0 #862431; color: #ffe3e4; font-size: 10px; }

/* stage */
.stage { display: flex; flex-direction: column; min-width: 0; min-height: 0; padding: 0 12px 8px 10px; }
.stage-head { flex: none; height: 53px; margin: 0 -12px 0 -10px; padding: 0 12px 0 10px; display: flex; align-items: center; background: #1f1022; border-bottom: 1px solid #362739; }
.home { width: 29px; height: 29px; border-radius: 15px; background: #35263a; border: 1px solid #4a3a4e; color: #fff; }
.titles { margin-inline-start: 8px; }
.titles h1 { font-size: 12px; line-height: 17px; color: #fff; }
.titles p { font-size: 9px; line-height: 14px; color: #a99bac; white-space: nowrap; }
.facts { margin-inline-start: auto; display: flex; align-items: center; font-size: 9px; line-height: 14px; white-space: nowrap; }
.facts > span + span { border-inline-start: 2px solid #463748; margin-inline-start: 6px; padding-inline-start: 5px; line-height: 10px; }
.players { display: flex; align-items: center; gap: 2px; }
.players i { width: 6px; height: 6px; border-radius: 3px; background: #61a3ea; }
.facts .muted { color: #9a8c9d; }
.word-card { flex: none; align-self: center; width: 187px; height: 57px; margin: 11px 0 10px; border-radius: 7px; background: #39293d; border: 1px solid #524256; display: flex; flex-direction: column; align-items: center; color: #d9ccdb; }
.word-card p { font-size: 11px; line-height: 29px; }
.dashes { display: flex; gap: 5px; margin-top: 16px; }
.dashes i { width: 7px; height: 2px; background: #f5e7f7; }
.easel { flex: 1; min-height: 0; display: grid; grid-template-columns: 38px minmax(0, 1fr) 37px; grid-template-rows: minmax(0, 1fr) 41px; background: #5c4f5e; border: 1px solid #6b5e6d; border-radius: 7px; overflow: hidden; }
.tools { display: flex; flex-direction: column; align-items: center; justify-content: space-between; height: 253px; padding-top: 6px; }
.tools button { width: 27px; height: 27px; border-radius: 7px; border: 1px solid #786c7a; background: #605362; color: #e7e0e8; }
.tools .on { background: #465586; border-color: #51699c; }
.canvas-area { min-width: 0; min-height: 0; background: #39293d; display: flex; justify-content: center; }
.canvas { height: 100%; max-width: 100%; aspect-ratio: 4 / 3; }
.palette { display: flex; flex-direction: column; align-items: center; justify-content: space-between; height: 269px; padding: 5px 0 0 5px; }
.palette h4 { font-size: 8px; line-height: 14px; color: #fff; }
.swatch { width: 22px; height: 22px; border-radius: 11px; border: 2px solid #cfc4d2; }
.black { background: #000; } .white { background: #fff; } .red { background: #ec0000; } .lime { background: #1bff1b; }
.blue { background: #0000ec; } .yellow { background: #ffff1a; } .orange { background: #ffa50a; } .purple { background: #7c0080; }
.custom { height: 32px; border-color: #f3e9ef; background: conic-gradient(from 45deg, #a92d8a, #3420c0, #7a2ac8, #e02b30, #f26b20, #f6d33c, #a2e13c, #d9e87a, #a92d8a); align-items: flex-start; }
.custom i { width: 14px; height: 14px; border-radius: 7px; background: #7a4b1c; border: 1px solid #fff; }
.easel-foot { grid-column: 1 / -1; display: flex; align-items: center; padding: 0 43px; gap: 8px; }
.brush-label { font-size: 9px; color: #f0e8f1; white-space: nowrap; }
.group { display: flex; align-items: center; height: 28px; padding: 0 3px; border: 1px solid #73677a; border-radius: 9px; }
.group button { width: 22px; height: 22px; border: 1px solid #75697a; border-radius: 11px; }
.sizes { gap: 7px; padding: 0 4px; }
.sizes i { border-radius: 50%; background: #b9b0bb; }
.sizes .on { border: 2px solid #f6f1f6; background: #706473; }
.history { margin-inline-start: auto; gap: 5px; }
.history button { border-radius: 7px; color: #d5cad7; }
.history .faint { border-color: #675b6a; color: #8f8392; }
.history .bar { background: #75697a; height: 22px; margin: 0 1px; }
.history .danger { background: #7c3a4e; border-color: #95485a; color: #eb9ba5; }
.actions { flex: none; margin-top: 11px; display: flex; justify-content: center; gap: 11px; }
.plain { padding: 0 13px 4px; font-size: 11px; line-height: 16px; }

/* settings */
.tabs { flex: none; display: flex; height: 31px; border-top: 1px solid #463649; }
.tabs button { flex: 1; padding-bottom: 3px; font-size: 9px; color: #c4b6c7; }
.tabs .on { background: #5c4d5f; color: #fff; border-bottom: 2px solid #f4e6f5; padding-bottom: 1px; font-size: 8px; font-weight: 700; }
.form { position: relative; flex: 1; min-height: 0; overflow: hidden; padding: 9px 11px 0 17px; }
.field { display: block; font-size: 8px; line-height: 16px; font-weight: 700; color: #e9dfeb; }
.slider { display: flex; align-items: center; height: 32px; margin-bottom: 8px; gap: 8px; }
.slider input { flex: 1; min-width: 0; appearance: none; height: 5px; margin: 0; border-radius: 3px; background: #5c4d5f; }
.slider input::-webkit-slider-thumb { appearance: none; width: 13px; height: 13px; border-radius: 7px; border: 0; background: #7b248c; }
.slider output { width: 32px; text-align: center; font-size: 12px; font-weight: 700; color: #fff; }
.hint { font-size: 8px; line-height: 14px; color: #9c8e9f; white-space: nowrap; }
.slider + .hint { margin-top: -11px; }
.hint + .field { margin-top: 13px; }
.choices { display: flex; flex-direction: column; gap: 8px; margin: 7px 0 3px; }
.choice { position: relative; flex: none; height: 47px; display: flex; align-items: center; justify-content: space-between; padding: 0 8px; border: 1px solid #4a3a4e; border-radius: 7px; background: #39293c; }
.choice + .choice { margin-top: -1px; }
.choice:nth-child(2n) { margin-top: 0; }
.choice input { position: absolute; inset: 0; opacity: 0; margin: 0; }
.choice-text { display: flex; flex-direction: column; white-space: nowrap; }
.choice b { font-size: 11px; line-height: 16px; font-weight: 500; color: #cabccd; }
.choice small { font-size: 8px; line-height: 14px; color: #a092a4; }
.choice.on { background: #3a1c3f; border-color: #46244c; }
.choice.on b { color: #fff; font-size: 9px; font-weight: 700; }
.tick { width: 14px; height: 14px; border-radius: 7px; background: #7b248c; display: grid; place-items: center; color: #fff; }
.side-foot { flex: none; padding: 11px 11px 8px; border-top: 1px solid #3c2d40; }

/* taskbar */
.taskbar { flex: none; height: 27px; background: #1c1c1c; display: flex; align-items: center; color: #e8e8e8; }
.start { width: 32px; height: 27px; }
.search { width: 192px; height: 27px; display: flex; align-items: center; gap: 7px; padding: 0 6px 0 8px; background: #2e2e2e; border: 1px solid #474747; }
.search input { flex: 1; min-width: 0; border: 0; padding: 0; background: none; font-size: 9px; outline: 0; }
.search input::placeholder { color: #d4d4d4; opacity: 1; }
.sparkles { width: 42px; height: 20px; }
.view { width: 30px; }
.links { width: 128px; padding-left: 5px; font-size: 8px; }
.dock { width: 588px; display: grid; grid-template-columns: repeat(18, 1fr); height: 27px; }
.dock button { border-bottom: 2px solid transparent; margin: 0 3px; }
.dock .open { border-bottom-color: #6fb1e8; }
.dock .active { background: #3f3f41; margin: 0; }
.weather { margin-left: auto; display: flex; align-items: center; gap: 5px; font-size: 9px; }
.tray { display: flex; gap: 5px; margin-left: 15px; }
.lang { margin-left: 11px; font-size: 10px; }
.clock { width: 58px; text-align: center; font-size: 8px; line-height: 12px; }
.notes { width: 27px; margin-right: 2px; border-right: 1px solid #3c3c3c; height: 27px; padding-right: 4px; }
</style>
